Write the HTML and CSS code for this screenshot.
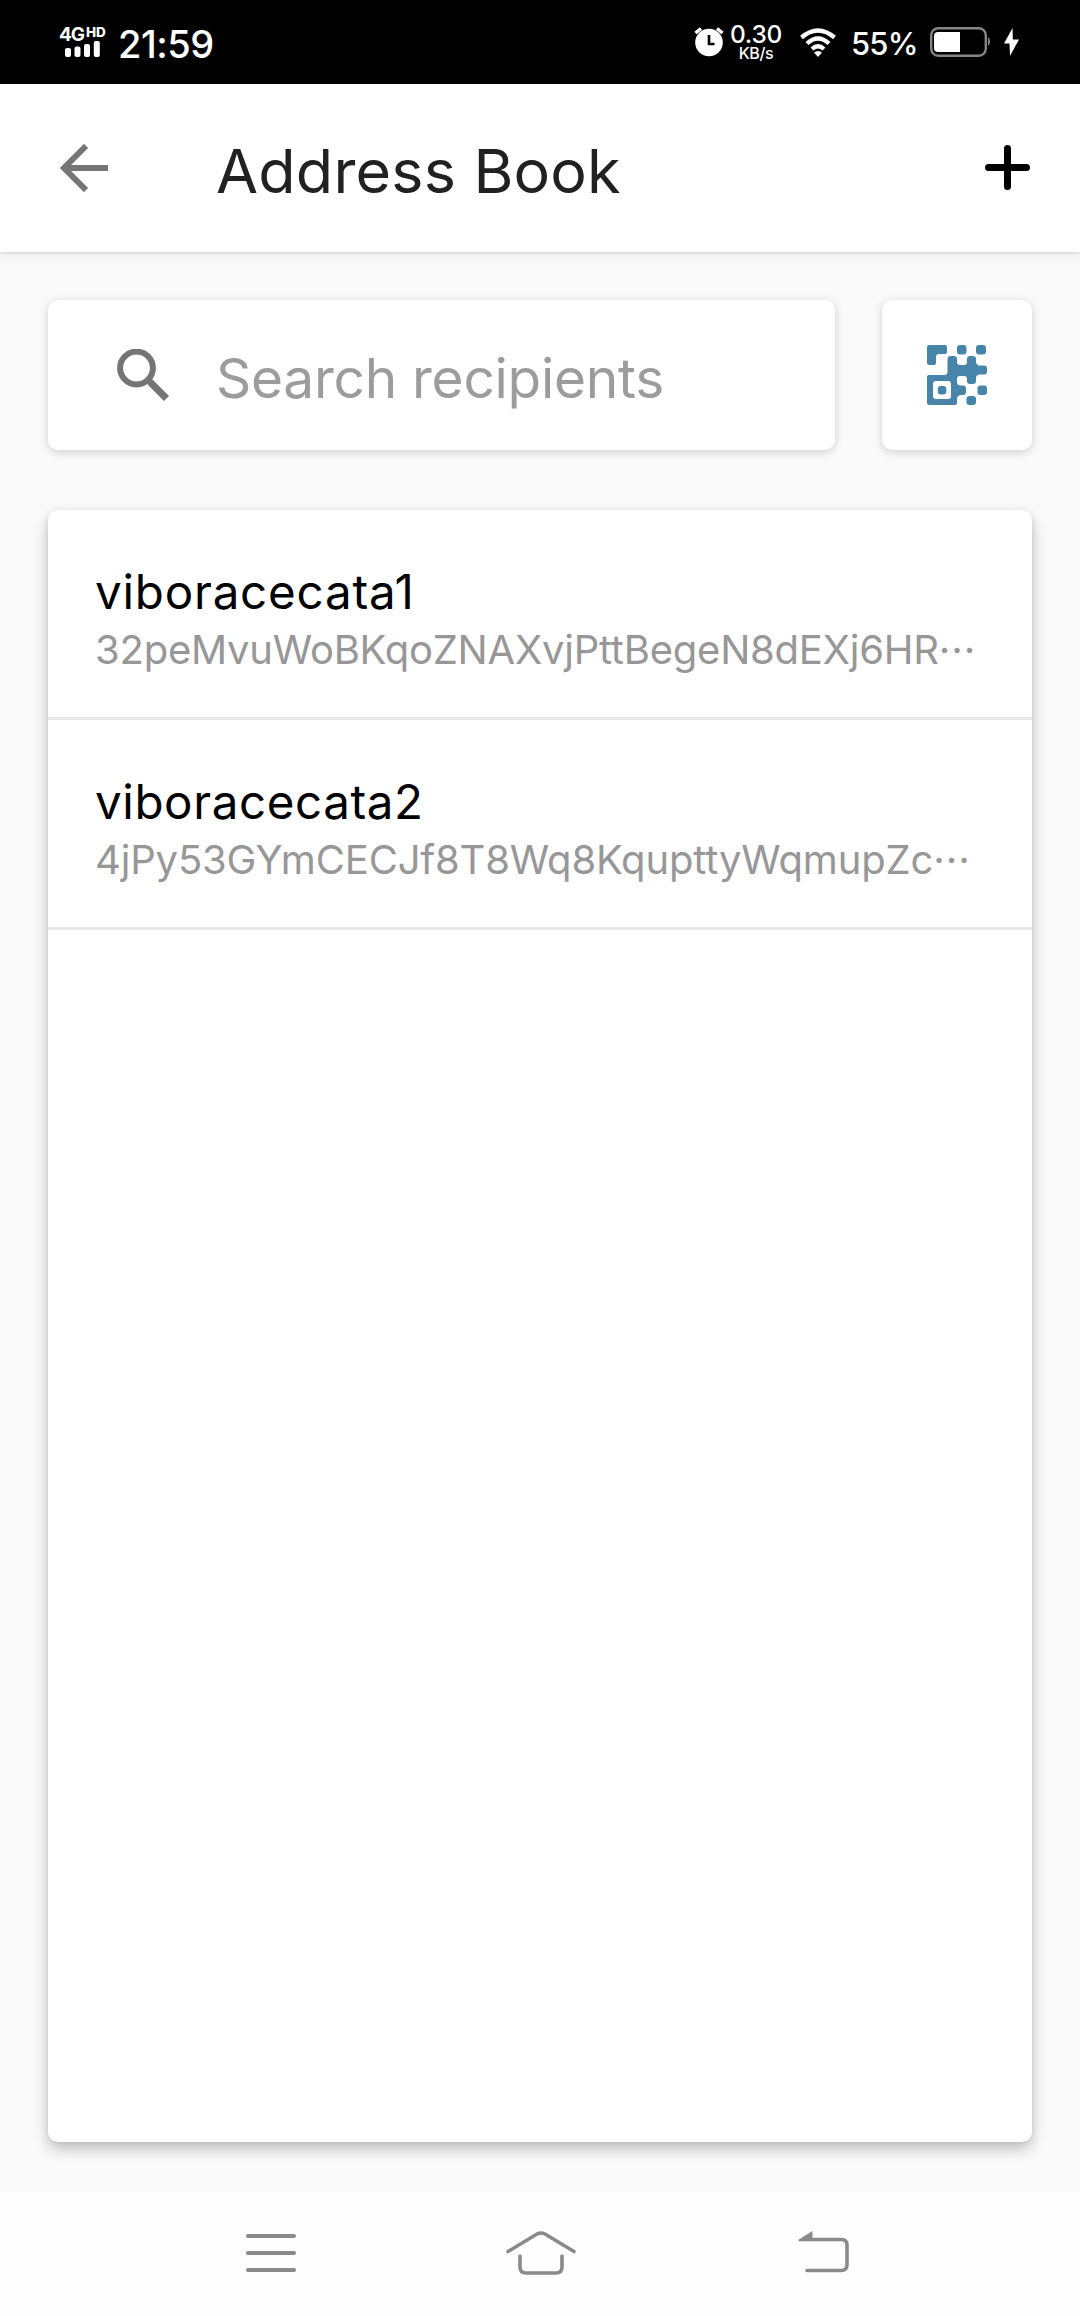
FILE: index.html
```html
<!DOCTYPE html>
<html lang="en">
<head>
<meta charset="utf-8">
<title>Address Book</title>
<link rel="stylesheet" href="styles.css">
</head>
<body>
<div class="screen">
  <div class="status">
    <div class="signal">
      <div class="network"><span class="gen">4G</span><span class="hd">HD</span></div>
      <svg class="bars" width="36" height="16" viewBox="0 0 36 16" fill="#fff"><rect x="0" y="7" width="6" height="9" rx="2"/><rect x="9.5" y="5.5" width="6" height="10.5" rx="2"/><rect x="19" y="3" width="6" height="13" rx="2"/><rect x="28.8" y="0" width="6" height="16" rx="2"/></svg>
    </div>
    <span class="time">21:59</span>
    <svg class="alarm" width="30" height="30" viewBox="0 0 30 30"><circle cx="15" cy="15.5" r="13.8" fill="#fff"/><path d="M1.5 6 7 1.500M23 1.500 28.500 6" stroke="#fff" stroke-width="3.500"/><path d="M15 8V17H20.500" fill="none" stroke="#000" stroke-width="2.600"/></svg>
    <div class="speed"><span class="rate">0.30</span><span class="unit">KB/s</span></div>
    <svg class="wifi" width="36" height="30" viewBox="0 0 36 30"><g fill="none" stroke="#fff" stroke-width="4.300"><path d="M1.500 9.500Q18-4.500 34.500 9.500"/><path d="M7 15.500Q18 5.500 29 15.500"/><path d="M12 21Q18 15.500 24 21"/></g><path d="M14 24.500Q18 21.500 22 24.500L18 29Z" fill="#fff"/></svg>
    <span class="percent">55%</span>
    <svg class="battery" width="60" height="30" viewBox="0 0 60 30"><rect x="1.200" y="1.200" width="54.600" height="27.600" rx="7" fill="none" stroke="#858585" stroke-width="2.400"/><path d="M8 5H30V25H8Q4 25 4 21V9Q4 5 8 5Z" fill="#fff"/><path d="M58 10Q60 11 60 14.500T58 19Z" fill="#858585"/></svg>
    <svg class="bolt" width="15" height="28" viewBox="0 0 15 28"><path d="M8.500 0 0 15.500H5.500L6 28 15 11.500H8.800Z" fill="#fff"/></svg>
  </div>

  <header class="header">
    <svg class="back" width="48" height="48" viewBox="0 0 48 48" fill="none" stroke="#757575" stroke-width="6"><path d="M48 24H4M26 2 4 24 26 46"/></svg>
    <h1 class="title">Address Book</h1>
    <svg class="plus" width="46" height="46" viewBox="0 0 46 46"><path d="M3.500 22.500H41.500M22.500 3.500V41.500" stroke="#000" stroke-width="7" stroke-linecap="round"/></svg>
  </header>

  <main class="content">
    <div class="tools">
      <div class="search">
        <svg class="lens" width="52" height="53" viewBox="0 0 52 53" fill="none" stroke="#757575"><circle cx="19.500" cy="19" r="16.400" stroke-width="6"/><path d="M31 30.500 34 33.500" stroke-width="6"/><path d="M33 33 49.500 49.500" stroke-width="7"/></svg>
        <span class="hint">Search recipients</span>
      </div>
      <div class="scan">
        <svg width="60" height="60" viewBox="0 0 60 60" fill="#4685a9"><path d="M2 0H18Q20 0 20 2V7Q20 9 18 9H12Q9 9 9 12V18Q9 20 7 20H2Q0 20 0 18V2Q0 0 2 0Z"/><rect x="30" width="9.500" height="9.500" rx="3"/><rect x="49" width="10" height="9.500" rx="3"/><path d="M24 11H27Q30 11 30 14V17Q30 20 33 20H37Q40 20 40 17V14Q40 11 43 11H46Q49 11 49 14V17Q49 19.500 51.500 20.500H57Q60 20.500 60 23.500V26.500Q60 29.500 57 29.500H52Q49 30 49 33V36Q49 39 46 39H43Q40 39 40 36V34Q40 31 37 31H33Q30 31 30 34V37Q30 40 33 40.500H36Q39 40.500 39 43.500V47Q39 50 36 50H33Q30 51 30 54V58Q30 60 28 60H2Q0 60 0 58V32Q0 30 2 30H17Q20.500 30 20.500 27V14Q20.500 11 24 11ZM9 36Q6 36 6 39V51Q6 54 9 54H21Q24 54 24 51V39Q24 36 21 36Z" fill-rule="evenodd"/><rect x="10.800" y="41" width="8.500" height="8.500" rx="3"/><rect x="50.500" y="40.500" width="9.500" height="9.500" rx="3"/><rect x="39.500" y="51" width="9.500" height="9" rx="3"/></svg>
      </div>
    </div>

    <section class="list">
      <div class="row">
        <div class="name n1">viboracecata1</div>
        <div class="address a1">32peMvuWoBKqoZNAXvjPttBegeN8dEXj6HR<span class="dots">···</span></div>
      </div>
      <div class="row">
        <div class="name">viboracecata2</div>
        <div class="address a2">4jPy53GYmCECJf8T8Wq8KqupttyWqmupZc<span class="dots">···</span></div>
      </div>
    </section>
  </main>

  <nav class="nav">
    <svg class="menu" width="50" height="38" viewBox="0 0 50 38"><path d="M2 2H48M2 19H48M2 36H48" stroke="#8a8a8a" stroke-width="4" stroke-linecap="round"/></svg>
    <svg class="home" width="70" height="44" viewBox="0 0 70 44" fill="none" stroke="#8a8a8a" stroke-width="3.600" stroke-linecap="round"><path d="M2 20.500 31 3Q35 1 39 3L68 20.500"/><path d="M14 25V36Q14 42 20 42H50Q56 42 56 36V25"/></svg>
    <svg class="return" width="51" height="42" viewBox="0 0 51 42"><path d="M14 8.500H43Q49 8.500 49 14V34Q49 39.500 43 39.500H9" fill="none" stroke="#8a8a8a" stroke-width="3.600" stroke-linecap="round"/><path d="M0 9 14.500 0V10.300H1Z" fill="#8a8a8a"/></svg>
  </nav>
</div>
</body>
</html>
```

FILE: styles.css
```css
* { box-sizing: border-box; }

body {
  margin: 0;
  font-family: Inter, "Liberation Sans", sans-serif;
}

svg { display: block; flex: none; }

.screen {
  display: flex;
  flex-direction: column;
  width: 1080px;
  height: 2316px;
  background: #fafafa;
  overflow: hidden;
}

.status {
  display: flex;
  align-items: flex-start;
  height: 84px;
  flex: none;
  padding-left: 59px;
  background: #000;
  color: #fff;
  white-space: nowrap;
}

.signal { width: 59px; padding-top: 26px; }
.network { display: flex; height: 15px; }
.gen { width: 27px; font-size: 19px; font-weight: 700; line-height: 17px; letter-spacing: -1px; }
.hd { font-size: 13.5px; font-weight: 800; line-height: 12px; letter-spacing: -0.2px; }
.bars { margin-left: 6px; }
.time { width: 576px; padding-top: 20px; font-size: 38px; line-height: 48px; font-weight: 500; letter-spacing: -0.5px; }
.alarm { margin-top: 27px; }
.speed { display: flex; flex-direction: column; align-items: center; width: 64px; padding-top: 22px; }
.rate { font-size: 24.5px; line-height: 24px; font-weight: 500; letter-spacing: -0.3px; }
.unit { font-size: 16px; line-height: 14px; font-weight: 500; letter-spacing: -0.4px; }
.wifi { margin: 28px 0 0 12px; }
.percent { width: 79px; margin-left: 15px; padding-top: 24px; font-size: 31px; line-height: 40px; font-weight: 500; letter-spacing: -0.8px; }
.battery { margin-top: 27px; }
.bolt { margin: 28px 0 0 14px; }

.header {
  display: flex;
  align-items: center;
  flex: none;
  height: 168px;
  padding: 0 49px 0 60px;
  background: #fff;
  box-shadow: 0 1px 3px rgba(0, 0, 0, 0.14), 0 4px 16px rgba(0, 0, 0, 0.06);
}

.title {
  flex: 1;
  margin: 0;
  padding: 6px 0 0 108px;
  font-size: 61px;
  font-weight: 400;
  line-height: 80px;
  letter-spacing: 0.2px;
  color: #212121;
  white-space: nowrap;
}

.content { flex: 1; display: flex; flex-direction: column; gap: 60px; padding: 48px 48px 50px; }
.tools { display: flex; gap: 47px; height: 150px; }

.search, .scan, .list { background: #fff; border-radius: 10px; }
.search, .scan { box-shadow: 0 2px 10px rgba(0, 0, 0, 0.18); }
.search { flex: 1; display: flex; align-items: center; padding-left: 69px; }
.hint { padding: 6px 0 0 47px; font-size: 55px; line-height: 70px; letter-spacing: -0.27px; color: #9c9c9c; white-space: nowrap; }
.scan { display: grid; place-items: center; width: 150px; }

.list { flex: 1; box-shadow: 0 7px 15px rgba(0, 0, 0, 0.24), 0 1px 5px rgba(0, 0, 0, 0.08); }
.row { height: 210px; padding: 54px 0 0 47px; border-bottom: 3px solid #e8e8e8; }
.name { font-size: 47.5px; line-height: 56px; letter-spacing: 0.6px; color: #000; }
.n1 { letter-spacing: 0.8px; }
.address { margin-top: 2px; font-size: 40px; line-height: 56px; color: #979797; white-space: nowrap; }
.a1 { letter-spacing: -0.23px; }
.a2 { letter-spacing: -0.16px; }
.dots { letter-spacing: 1px; }

.nav {
  display: flex;
  flex: none;
  align-items: flex-start;
  height: 124px;
  padding: 39px 0 0 246px;
  background: #fefefe;
}
.menu { margin-top: 3px; }
.home { margin-left: 210px; }
.return { margin-left: 222px; }
```
